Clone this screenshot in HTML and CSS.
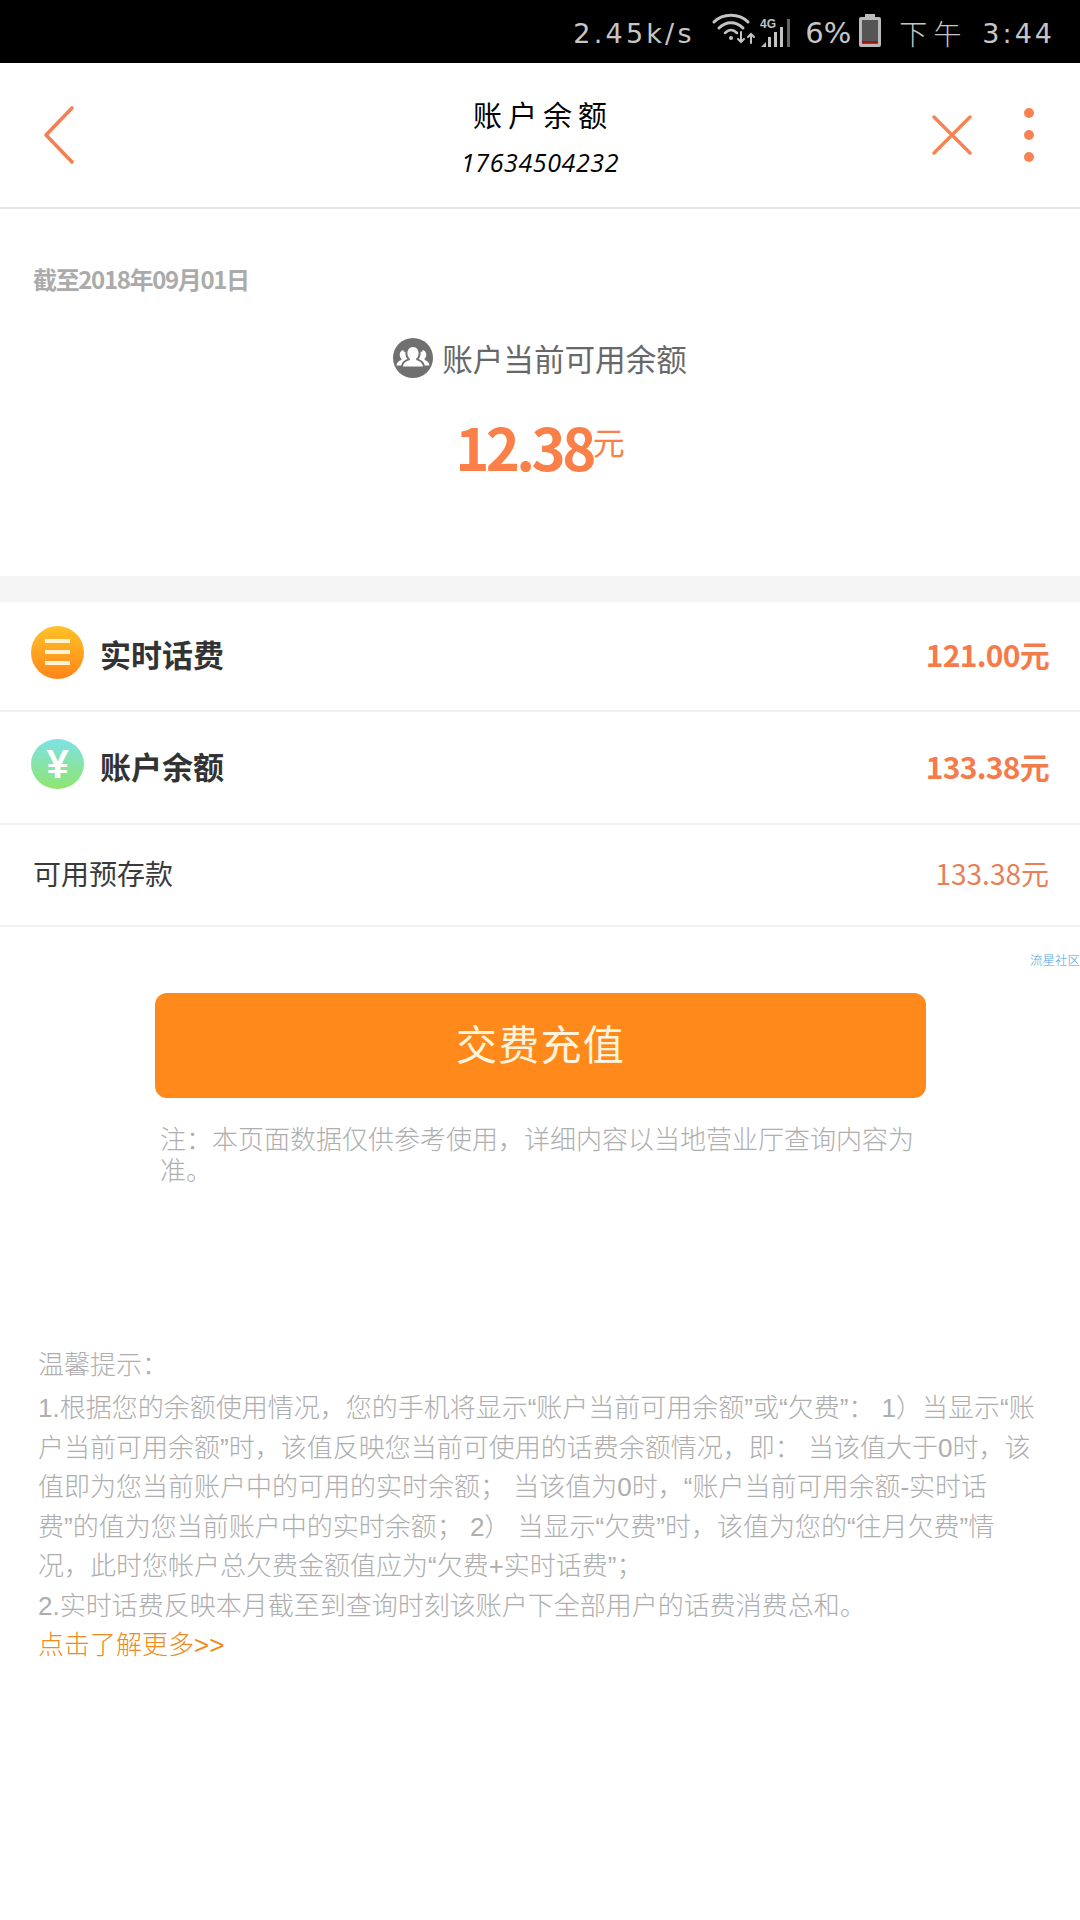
FILE: index.html
```html
<!DOCTYPE html>
<html lang="zh-CN">
<head>
<meta charset="utf-8">
<title>账户余额</title>
<link rel="stylesheet" href="styles.css">
</head>
<body>
<div class="page">
  <div class="statusbar">
    <span class="st-speed">2.45k/s</span>
    <svg class="st-wifi" width="44" height="32" viewBox="0 0 44 32" fill="none" stroke="#c4c4c4" stroke-linecap="round">
      <path d="M2 9C11 0 27 0 36 9" stroke-width="3"/>
      <path d="M7 15C14 8 24 8 31 15" stroke-width="3"/>
      <path d="M13 20C17 16 21 16 25 20" stroke-width="2.5"/>
      <circle cx="19" cy="25" r="2" fill="#c4c4c4" stroke="none"/>
      <path d="M29 19V29M26 26L29 29L32 26" stroke-width="2"/>
      <path d="M39 30V21M36 24L39 21L42 24" stroke-width="2"/>
    </svg>
    <svg class="st-signal" width="32" height="30" viewBox="0 0 32 30">
      <text class="st-4g" x="0" y="10">4G</text>
      <path d="M1 29L6 24V29Z" fill="#c4c4c4"/>
      <rect x="8" y="19" width="3" height="10" fill="#c4c4c4"/>
      <rect x="14" y="14" width="3" height="15" fill="#c4c4c4"/>
      <rect x="20" y="9" width="3" height="20" fill="#c4c4c4"/>
      <rect x="27" y="1" width="3" height="28" fill="#666"/>
    </svg>
    <span class="st-pct">6%</span>
    <svg class="st-batt" width="22" height="33" viewBox="0 0 22 33">
      <rect x="6" y="0" width="10" height="4" fill="#bbb"/>
      <rect x="0" y="3" width="22" height="30" rx="2" fill="#bbb"/>
      <rect x="3" y="6" width="16" height="24" fill="#555"/>
      <rect x="3" y="27" width="16" height="2" fill="#a11"/>
    </svg>
    <span class="st-ampm">下 午</span>
    <span class="st-time">3:44</span>
  </div>

  <header class="topbar">
    <svg class="back" width="34" height="60" viewBox="0 0 34 60" fill="none" stroke="#f47f53" stroke-width="3.6" stroke-linecap="round" stroke-linejoin="round">
      <path d="M30 3L4 30L30 57"/>
    </svg>
    <div class="titles">
      <div class="title">账户余额</div>
      <div class="phone">17634504232</div>
    </div>
    <div class="actions">
      <svg width="40" height="40" viewBox="0 0 40 40" fill="none" stroke="#f88252" stroke-width="3.4" stroke-linecap="round">
        <path d="M2 2L38 38M38 2L2 38"/>
      </svg>
      <svg width="12" height="56" viewBox="0 0 12 56" fill="#f88252">
        <circle cx="6" cy="6" r="5"/><circle cx="6" cy="28" r="5"/><circle cx="6" cy="50" r="5"/>
      </svg>
    </div>
  </header>

  <section class="balance">
    <div class="date">截至2018年09月01日</div>
    <div class="label">
      <svg width="40" height="40" viewBox="0 0 40 40">
        <circle cx="20" cy="20" r="20" fill="#707070"/>
        <path fill="#fff" d="M20 9c3.4 0 5.6 2.8 5.6 6.2 0 2.4-1 4.3-2.400 5.400v1.400c3.600 1.200 6.400 2.800 6.800 6.500H10c.4-3.700 3.200-5.300 6.800-6.500v-1.400c-1.400-1.100-2.400-3-2.400-5.400C14.400 11.800 16.600 9 20 9z"/>
        <path fill="#fff" d="M10.500 13.500c.8 0 1.500.2 2.100.6-.1.500-.2 1-.2 1.500 0 2 .7 3.900 2 5.300v.1c-2.800 1-5.400 2.700-6.200 6.500H3.500c.2-3 2.200-4.500 4.900-5.500v-1.300c-1-.9-1.700-2.300-1.700-3.900 0-2.600 1.600-4.800 3.800-4.800z"/>
        <path fill="#fff" d="M29.500 13.500c-.8 0-1.500.2-2.100.6.100.5.200 1 .2 1.500 0 2-.7 3.900-2 5.300v.1c2.800 1 5.400 2.700 6.200 6.500h4.700c-.2-3-2.200-4.500-4.900-5.500v-1.300c1-.9 1.700-2.300 1.700-3.900 0-2.600-1.600-4.800-3.800-4.800z"/>
      </svg>
      <span>账户当前可用余额</span>
    </div>
    <div class="amount"><span class="amount-num">12.38</span><span class="amount-unit">元</span></div>
  </section>

  <div class="band"></div>

  <div class="row row-a">
    <div class="row-left">
      <span class="ico ico-orange"><i></i><i></i><i></i></span>
      <span class="row-name">实时话费</span>
    </div>
    <span class="row-val">121.00元</span>
  </div>
  <div class="row row-b">
    <div class="row-left">
      <span class="ico ico-green">¥</span>
      <span class="row-name">账户余额</span>
    </div>
    <span class="row-val">133.38元</span>
  </div>
  <div class="row row-c">
    <span class="row-plain">可用预存款</span>
    <span class="row-val-plain">133.38元</span>
  </div>

  <div class="mark-wrap"><span class="mark">流星社区</span></div>

  <button class="pay">交费充值</button>
  <p class="note">注<span class="p">：</span>本页面数据仅供参考使用<span class="p">，</span>详细内容以当地营业厅查询内容为<br>准。</p>

  <section class="tips">
    <div class="tips-head">温馨提示<span class="p">：</span></div>
    <div class="tips-body">1.根据您的余额使用情况<span class="p">，</span>您的手机将显示“账户当前可用余额”或“欠费”<span class="p">：</span> 1）当显示“账<br>户当前可用余额”时<span class="p">，</span>该值反映您当前可使用的话费余额情况<span class="p">，</span>即<span class="p">：</span> 当该值大于0时<span class="p">，</span>该<br>值即为您当前账户中的可用的实时余额<span class="p">；</span> 当该值为0时<span class="p">，</span>“账户当前可用余额-实时话<br>费”的值为您当前账户中的实时余额<span class="p">；</span> 2） 当显示“欠费”时<span class="p">，</span>该值为您的“往月欠费”情<br>况<span class="p">，</span>此时您帐户总欠费金额值应为“欠费+实时话费”<span class="p">；</span><br>2.实时话费反映本月截至到查询时刻该账户下全部用户的话费消费总和。<br><a class="more">点击了解更多&gt;&gt;</a></div>
  </section>
</div>
</body>
</html>
```
FILE: styles.css
```css
* { box-sizing: border-box; }
html, body { margin: 0; padding: 0; background: #fff; }
body { font-family: "Noto Sans CJK SC", "Noto Sans", sans-serif; }
.page { width: 1080px; height: 1920px; overflow: hidden; background: #fff; }

.statusbar {
  height: 63px; background: #000; color: #c6c6c6;
  display: flex; align-items: center; justify-content: flex-end;
  padding: 3px 25px 0 0; font-family: "DejaVu Sans", sans-serif;
}
.st-speed { font-size: 27px; letter-spacing: 3.2px; width: 139px; white-space: nowrap; }
.st-wifi { margin-right: 4px; margin-top: -9px; }
.st-signal { margin-right: 13px; margin-top: -1px; }
.st-4g { font: 700 12px "Liberation Sans", sans-serif; fill: #c4c4c4; }
.st-pct { font-size: 29px; width: 54px; }
.st-batt { margin-right: 18px; margin-top: -5px; }
.st-ampm { font-family: "Noto Sans CJK SC", sans-serif; font-weight: 300; font-size: 28px; width: 83px; white-space: nowrap; }
.st-time { font-size: 27px; letter-spacing: 3px; white-space: nowrap; }

.topbar {
  height: 146px; border-bottom: 2px solid #e6e6e6;
  display: grid; grid-template-columns: 1fr auto 1fr; align-items: center;
  padding: 0 45px;
}
.back { margin-left: -3px; }
.titles { text-align: center; color: #000; padding-top: 6px; }
.title { font-size: 29px; letter-spacing: 6px; margin-right: -6px; line-height: 44px; }
.phone { font-family: "Open Sans", sans-serif; font-size: 25px; font-style: italic; line-height: 44px; letter-spacing: 0.6px; margin-top: 4px; }
.actions { justify-self: end; display: flex; align-items: center; gap: 51px; }

.balance { height: 367px; }
.date { padding: 51px 0 0 33px; font-size: 24px; line-height: 38px; font-weight: 700; color: #ababab; letter-spacing: -1.35px; }
.label {
  margin-top: 40px; display: flex; justify-content: center; align-items: center; gap: 9px;
  font-size: 30.600px; line-height: 40px; color: #686868;
}
.amount { margin-top: 28px; display: flex; justify-content: center; align-items: flex-start; color: #fb7f48; }
.amount-num { font-size: 58px; font-weight: 700; line-height: 80px; letter-spacing: -3.6px; }
.amount-unit { font-size: 32px; line-height: 40px; margin: 15px 0 0 0; }

.band { height: 26px; background: #f5f5f5; }

.row { display: flex; align-items: center; justify-content: space-between; padding: 0 31px 4px 31px; border-bottom: 2px solid #f1f1f1; }
.row-a { height: 110px; }
.row-b { height: 113px; }
.row-c { height: 102px; padding-left: 33px; }
.row-left { display: flex; align-items: center; gap: 16px; }
.row-name { font-size: 31px; font-weight: 700; color: #333; line-height: 40px; }
.row-val { font-size: 30px; font-weight: 700; color: #f67b4a; letter-spacing: -0.7px; }
.row-plain { font-size: 28px; color: #3a3a3a; }
.row-val-plain { font-size: 28px; color: #e87f57; }
.ico { width: 53px; height: 53px; border-radius: 50%; display: flex; flex-direction: column; align-items: center; justify-content: center; margin-top: -4px; }
.ico-orange { background: linear-gradient(#ffc229, #ff8518); gap: 7px; }
.ico-orange i { display: block; width: 25px; height: 4px; background: #fff3d6; }
.ico-green { height: 50px; background: linear-gradient(#7de2e6, #8fe56e); color: #fff; font: 700 40px/1 "Liberation Sans", sans-serif; }

.mark-wrap { height: 66px; display: flex; justify-content: flex-end; align-items: flex-start; padding-top: 25px; }
.mark { font-size: 12.500px; line-height: 16px; color: #4a9ede; font-weight: 300; white-space: nowrap; }

.pay {
  display: block; width: 771px; height: 105px; margin: 0 0 0 155px; padding: 0 0 6px; border: 0; border-radius: 12px;
  background: #ff8a1b; color: #fff4dd; font: 400 41px/1 "Noto Sans CJK SC", sans-serif; letter-spacing: 1.300px;
}
.note { margin: 24px 0 0 160px; width: 760px; font-size: 26px; line-height: 31px; color: #aeaeae; font-weight: 300; }

.tips { padding: 160px 0 0 38px; color: #aeaeae; font-weight: 300; }
.tips-head { font-size: 26px; line-height: 40px; margin-top: -1px; }
.tips-body { font-family: "Liberation Sans", "Noto Sans CJK SC", sans-serif; font-size: 26px; line-height: 39.500px; margin-top: 6px; white-space: nowrap; }
.p { font-family: "Noto Sans CJK TC", sans-serif; line-height: 0; }
.more { color: #f08a1c; }
```
